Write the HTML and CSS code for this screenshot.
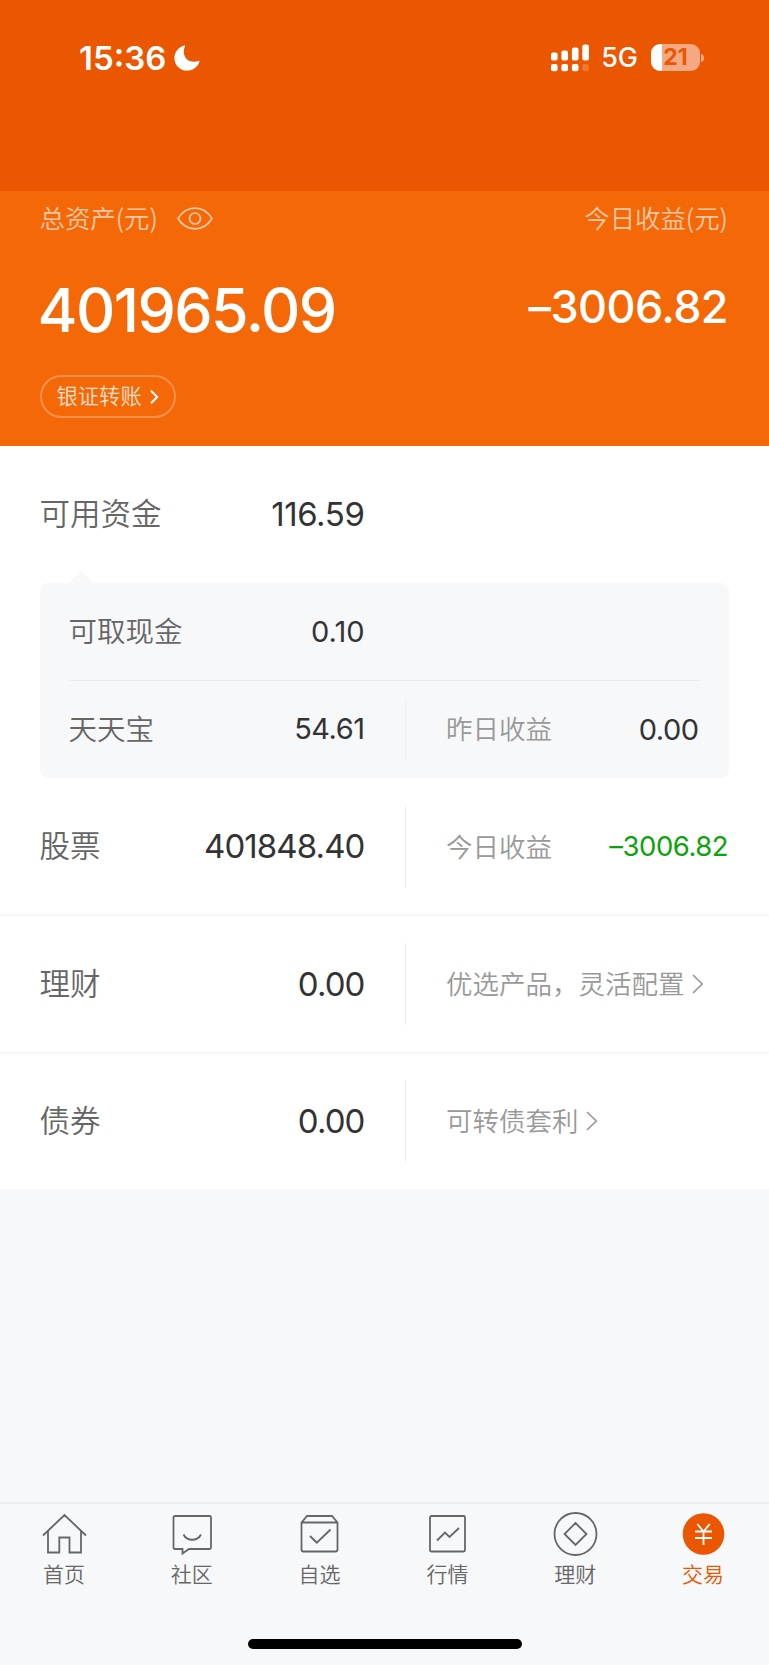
FILE: index.html
```html
<!DOCTYPE html>
<html lang="zh-CN">
<head>
<meta charset="utf-8">
<title>交易</title>
<link rel="stylesheet" href="styles.css">
</head>
<body>
<div class="app">
  <header class="status">
    <div class="status-left">
      <span class="time n">15:36</span>
      <svg class="moon" width="26" height="26" viewBox="0 0 26 26"><path d="M10.3 0.4C4.6 1.8 0.4 6.800 0.400 12.900C0.400 20 6 25.600 13 25.600C18.800 25.600 23.900 21.600 25.500 16.400C25.600 15.900 25.200 15.600 24.700 15.800C23.300 16.500 21.900 16.800 20.200 16.800C13.900 16.800 9.800 12.700 9.800 6.500C9.800 4.500 10.200 2.700 11 1.200C11.200 .7 10.900 .2 10.300 .4Z" fill="#fff"/></svg>
    </div>
    <div class="status-right">
      <svg class="signal" width="38" height="28" viewBox="0 0 38 28" fill="#fff"><rect x="0" y="8.500" width="6.600" height="8" rx="2"/><rect x="10.400" y="6.500" width="6.600" height="10" rx="2"/><rect x="20.900" y="3.500" width="6.600" height="13" rx="2"/><rect x="31.300" y="0.500" width="6.600" height="16" rx="2"/><rect x="0" y="20" width="6.600" height="7.300" rx="2"/><rect x="10.400" y="20" width="6.600" height="7.300" rx="2"/><rect x="20.900" y="20" width="6.600" height="7.300" rx="2"/><rect x="31.300" y="20" width="6.600" height="7.300" rx="2" opacity=".2"/></svg>
      <span class="net n">5G</span>
      <div class="battery"><span class="level n">21</span></div>
      <svg class="nub" width="4" height="8" viewBox="0 0 4 8"><path d="M0 0C4.300 1 4.300 7 0 8Z" fill="#f5a982"/></svg>
    </div>
  </header>

  <section class="hero">
    <div class="hero-top">
      <div class="hero-label"><span class="c">总资产(元)</span>
        <svg class="eye" width="36" height="23" viewBox="0 0 36 23" fill="none" stroke="#fcc9a5" stroke-width="1.700"><path d="M1 11.500C9.500-2.300 26.500-2.300 35 11.500C26.500 25.300 9.500 25.300 1 11.500Z"/><circle cx="18" cy="11.500" r="5.500"/></svg>
      </div>
      <span class="c">今日收益(元)</span>
    </div>
    <div class="hero-values"><span class="total n">401965.09</span><span class="today n">–3006.82</span></div>
    <div class="transfer"><span class="c">银证转账</span><svg width="9" height="14" viewBox="0 0 9 14" fill="none" stroke="#fff" stroke-width="2"><path d="M1 0.800L7.200 7L1 13.200"/></svg></div>
  </section>

  <main class="assets">
    <div class="row first"><span class="name c">可用资金</span><span class="amount n">116.59</span></div>
    <section class="panel">
      <div class="sub"><span class="name c">可取现金</span><span class="amount short n">0.10</span></div>
      <div class="sub line"><span class="name c">天天宝</span><span class="amount n">54.61</span><div class="extra"><span class="c">昨日收益</span><span class="gain n">0.00</span></div></div>
    </section>
    <div class="row"><span class="name c">股票</span><span class="amount n">401848.40</span><div class="extra"><span class="c">今日收益</span><span class="loss n">–3006.82</span></div></div>
    <div class="row line"><span class="name c">理财</span><span class="amount n">0.00</span><div class="extra link"><span class="c">优选产品，灵活配置</span><svg width="12" height="20" viewBox="0 0 12 20"><path d="M1 1L10.200 10L1 19"/></svg></div></div>
    <div class="row line"><span class="name c">债券</span><span class="amount n">0.00</span><div class="extra link"><span class="c">可转债套利</span><svg width="12" height="20" viewBox="0 0 12 20"><path d="M1 1L10.200 10L1 19"/></svg></div></div>
  </main>

  <nav class="tabs">
    <a class="tab"><svg viewBox="0 0 44 44"><path d="M1 23.500L22.500 3L44 23.500M6 19V40.500H17.300V25.500H27.500V40.500H39V19"/></svg><span class="c">首页</span></a>
    <a class="tab"><svg viewBox="0 0 44 44"><path d="M5 4H39.500Q41 4 41 5.500V35.500Q41 37 39.500 37H19L12.500 41.500V37H5Q3.500 37 3.500 35.500V5.500Q3.500 4 5 4ZM13.500 22.500C17 29.500 27.500 29.500 31 22.500"/></svg><span class="c">社区</span></a>
    <a class="tab"><svg viewBox="0 0 44 44"><path d="M9 4H34L39.500 10.500V37.500Q39.500 39.500 37.500 39.500H5.500Q3.500 39.500 3.500 37.500V10.500ZM3.500 10.500H39.500M12 24L18.800 30.700L32.500 17.500"/></svg><span class="c">自选</span></a>
    <a class="tab"><svg viewBox="0 0 44 44"><rect x="5" y="4" width="35" height="35.500" rx="1.500"/><path d="M12 28.500L20 20.500L24.500 25L34 16"/></svg><span class="c">行情</span></a>
    <a class="tab"><svg viewBox="0 0 44 44"><circle cx="22.500" cy="22" r="21"/><path d="M22.500 11L33.500 22L22.500 33L11.500 22Z"/></svg><span class="c">理财</span></a>
    <a class="tab active"><svg viewBox="0 0 44 44"><circle cx="22.500" cy="22" r="20.800" fill="#eb5600" stroke="none"/><path d="M16.300 12L22.500 19.500L28.800 12M14.100 19.500H31M14.100 26H31M22.500 19.500V33" stroke="#fff"/></svg><span class="c">交易</span></a>
  </nav>
  <div class="home"></div>
</div>
</body>
</html>
```
FILE: styles.css
```css
* { box-sizing: border-box; }
body { margin: 0; background: #f7f8fa; font-family: Inter, "Noto Sans CJK SC", sans-serif; }
.app { width: 769px; height: 1665px; display: flex; flex-direction: column; overflow: hidden; }
.c { font-family: "Noto Sans CJK SC", sans-serif; font-weight: 350; white-space: nowrap; padding-bottom: 4px; }
.n { font-family: Inter, "Liberation Sans", sans-serif; font-feature-settings: "calt" 0; white-space: nowrap; }

.status { height: 191px; background: #eb5600; color: #fff; padding: 37.500px 64px 0 79px; display: flex; justify-content: space-between; align-items: flex-start; }
.status-left, .status-right { height: 40px; display: flex; align-items: center; }
.time { font-size: 33px; font-weight: 600; line-height: 40px; font-feature-settings: "calt" 1; }
.moon { margin-left: 8px; }
.net { font-size: 27px; font-weight: 500; margin-left: 12px; }
.battery { width: 49px; height: 27px; margin-left: 13px; border-radius: 9px; background: linear-gradient(to right, #fff 10.500px, #f5a982 10.500px); text-align: center; }
.level { display: block; color: #eb5600; font-size: 23px; font-weight: 700; line-height: 27px; }
.nub { margin-left: 1px; }

.hero { height: 255px; background: #f56808; color: #fff; padding: 9px 41px 0 39.500px; }
.hero-top { height: 38px; display: flex; justify-content: space-between; align-items: center; color: #fcc9a5; font-size: 25.400px; }
.hero-label { display: flex; align-items: center; }
.eye { margin-left: 19px; margin-bottom: 2px; }
.hero-values { height: 137px; display: flex; justify-content: space-between; align-items: center; }
.total { font-size: 61px; font-weight: 540; letter-spacing: -1.600px; padding-top: 6px; margin-left: -2px; }
.today { font-size: 45px; font-weight: 520; letter-spacing: -0.600px; }
.transfer { width: 136.500px; height: 43px; border: 2px solid #f8914c; border-radius: 22px; display: flex; align-items: center; padding-left: 15px; font-size: 21.300px; color: #fde0cd; }
.transfer svg { margin-left: 8px; }

.assets { height: 743px; background: #fff; }
.row { height: 137px; display: flex; align-items: center; padding: 0 41px 0 39.500px; font-size: 30.500px; }
.name { color: #666; width: 150px; }
.row .name { padding-bottom: 5px; }
.amount { color: #333; width: 175px; text-align: right; font-size: 33px; font-weight: 370; letter-spacing: -0.900px; padding-bottom: 1px; }
.first .amount { letter-spacing: -0.400px; }
.line { border-top: 1px solid #f0f0f2; }
.extra { flex: 1; height: 82px; border-left: 1px solid #eee; margin-left: 40.500px; padding-left: 40px; display: flex; align-items: center; justify-content: space-between; font-size: 26.500px; color: #999; }
.extra .c { padding-bottom: 3px; }
.gain { color: #333; font-size: 29px; font-weight: 370; letter-spacing: -0.500px; margin-right: 1.500px; }
.loss { color: #0aa30a; font-size: 27.500px; font-weight: 370; letter-spacing: -0.500px; padding-bottom: 1px; }
.link { justify-content: flex-start; }
.link svg { margin-left: 7px; fill: none; stroke: #999; stroke-width: 1.700; }
.panel { position: relative; margin: 0 40px 0 39.500px; padding: 0 29px; height: 195px; border-radius: 8px; background: #f7f8fa; }
.panel::before { content: ""; position: absolute; left: 29px; top: -12px; border: 12px solid transparent; border-top: 0; border-bottom-color: #f7f8fa; }
.sub { height: 97px; display: flex; align-items: center; font-size: 28.500px; }
.sub .name { width: 140px; }
.sub .amount { font-size: 29px; width: 156px; letter-spacing: -0.500px; }
.sub .short { letter-spacing: 0; }
.sub .extra { height: 59px; }
.sub.line { border-color: #e8eaec; }

.tabs { margin-top: 313px; height: 120px; padding-right: 2px; border-top: 2px solid #ebecee; display: grid; grid-template-columns: repeat(6, 1fr); }
.tab { display: flex; flex-direction: column; align-items: center; padding-top: 8px; color: #666; font-size: 21px; line-height: 30px; }
.tab svg { width: 44px; height: 44px; fill: none; stroke: #666; stroke-width: 1.800; margin-bottom: 2px; overflow: visible; }
.active { color: #eb5600; }
.home { width: 274px; height: 10px; border-radius: 5px; background: #000; margin: 17px auto 0; }
```
